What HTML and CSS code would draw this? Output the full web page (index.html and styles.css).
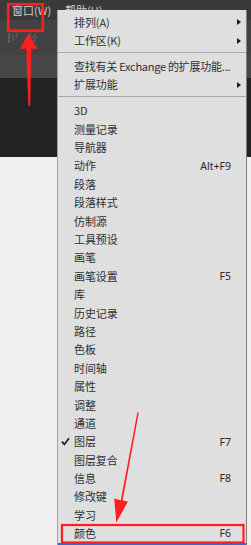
FILE: index.html
```html
<!DOCTYPE html>
<html lang="zh-CN">
<head>
<meta charset="utf-8">
<title>窗口菜单</title>
<link rel="stylesheet" href="styles.css">
</head>
<body>
<div class="app">
  <div class="menubar">
    <span class="menubar-item">窗口(W)</span>
    <span class="menubar-item">帮助(H)</span>
  </div>
  <div class="toolbar">
    <svg class="tool" width="12" height="12" viewBox="0 0 12 12"><rect x="1" y="1" width="2" height="10" fill="#5f5f5f"/><rect x="5" y="3" width="2" height="6" fill="#585858"/><rect x="9" y="1" width="2" height="4" fill="#5a5a5a"/></svg>
    <svg class="tool" width="12" height="12" viewBox="0 0 12 12"><rect x="2" y="1" width="2" height="10" fill="#5c5c5c"/><rect x="5" y="4" width="5" height="2" fill="#5c5c5c"/><rect x="7" y="2" width="2" height="8" fill="#555"/></svg>
    <svg class="tool tool-far" width="6" height="12" viewBox="0 0 6 12"><rect x="1" y="1" width="3" height="10" fill="#555"/></svg>
  </div>
  <div class="optbar"></div>
  <div class="docarea"></div>
  <div class="canvas"></div>

  <div class="menu">
    <div class="item"><span class="gutter"></span><span class="label">排列(A)</span><span class="key"></span><span class="sub"><i class="tri"></i></span></div>
    <div class="item"><span class="gutter"></span><span class="label">工作区(K)</span><span class="key"></span><span class="sub"><i class="tri"></i></span></div>
    <div class="sep"></div>
    <div class="item"><span class="gutter"></span><span class="label label-tight">查找有关 Exchange 的扩展功能...</span><span class="key"></span><span class="sub"></span></div>
    <div class="item"><span class="gutter"></span><span class="label">扩展功能</span><span class="key"></span><span class="sub"><i class="tri"></i></span></div>
    <div class="sep"></div>
    <div class="item"><span class="gutter"></span><span class="label">3D</span><span class="key"></span><span class="sub"></span></div>
    <div class="item"><span class="gutter"></span><span class="label">测量记录</span><span class="key"></span><span class="sub"></span></div>
    <div class="item"><span class="gutter"></span><span class="label">导航器</span><span class="key"></span><span class="sub"></span></div>
    <div class="item"><span class="gutter"></span><span class="label">动作</span><span class="key">Alt+F9</span><span class="sub"></span></div>
    <div class="item"><span class="gutter"></span><span class="label">段落</span><span class="key"></span><span class="sub"></span></div>
    <div class="item"><span class="gutter"></span><span class="label">段落样式</span><span class="key"></span><span class="sub"></span></div>
    <div class="item"><span class="gutter"></span><span class="label">仿制源</span><span class="key"></span><span class="sub"></span></div>
    <div class="item"><span class="gutter"></span><span class="label">工具预设</span><span class="key"></span><span class="sub"></span></div>
    <div class="item"><span class="gutter"></span><span class="label">画笔</span><span class="key"></span><span class="sub"></span></div>
    <div class="item"><span class="gutter"></span><span class="label">画笔设置</span><span class="key">F5</span><span class="sub"></span></div>
    <div class="item"><span class="gutter"></span><span class="label">库</span><span class="key"></span><span class="sub"></span></div>
    <div class="item"><span class="gutter"></span><span class="label">历史记录</span><span class="key"></span><span class="sub"></span></div>
    <div class="item"><span class="gutter"></span><span class="label">路径</span><span class="key"></span><span class="sub"></span></div>
    <div class="item"><span class="gutter"></span><span class="label">色板</span><span class="key"></span><span class="sub"></span></div>
    <div class="item"><span class="gutter"></span><span class="label">时间轴</span><span class="key"></span><span class="sub"></span></div>
    <div class="item"><span class="gutter"></span><span class="label">属性</span><span class="key"></span><span class="sub"></span></div>
    <div class="item"><span class="gutter"></span><span class="label">调整</span><span class="key"></span><span class="sub"></span></div>
    <div class="item"><span class="gutter"></span><span class="label">通道</span><span class="key"></span><span class="sub"></span></div>
    <div class="item"><span class="gutter"><svg class="check" width="9" height="9" viewBox="0 0 9 9"><polyline points="1,4.6 3.3,7.4 8,1.2" fill="none" stroke="#1e1e1e" stroke-width="1.7"/></svg></span><span class="label">图层</span><span class="key">F7</span><span class="sub"></span></div>
    <div class="item"><span class="gutter"></span><span class="label">图层复合</span><span class="key"></span><span class="sub"></span></div>
    <div class="item"><span class="gutter"></span><span class="label">信息</span><span class="key">F8</span><span class="sub"></span></div>
    <div class="item"><span class="gutter"></span><span class="label">修改键</span><span class="key"></span><span class="sub"></span></div>
    <div class="item"><span class="gutter"></span><span class="label">学习</span><span class="key"></span><span class="sub"></span></div>
    <div class="item"><span class="gutter"></span><span class="label">颜色</span><span class="key">F6</span><span class="sub"></span></div>
    <div class="item-selected"></div>
  </div>

  <svg class="annot" width="251" height="545" viewBox="0 0 251 545">
    <rect x="8.2" y="4.2" width="34.6" height="26.6" fill="none" stroke="#ff1f1f" stroke-width="2.6"/>
    <polygon points="28.5,33.5 37.5,49 31.3,48.5 30.2,106 28.4,106 26.2,48.5 20,49" fill="#ff1f1f"/>
    <polygon points="138.8,412.5 137.4,412.3 120.8,500.2 114.2,498.6 116.3,522.5 127.9,501.6 122.6,500.6" fill="#ff1f1f"/>
    <rect x="62" y="525" width="181.5" height="17.5" fill="none" stroke="#ff1f1f" stroke-width="2.2"/>
  </svg>
</div>
</body>
</html>
```

FILE: styles.css
```css
html, body {
  margin: 0;
  padding: 0;
}

body {
  width: 251px;
  height: 545px;
  overflow: hidden;
  background: #efefef;
  font-family: "Noto Sans", "Noto Sans CJK SC", sans-serif;
}

.app {
  position: relative;
  width: 251px;
  height: 545px;
  display: flex;
  flex-direction: column;
  overflow: hidden;
}

.menubar {
  height: 20px;
  flex: none;
  display: flex;
  align-items: center;
  gap: 14px;
  padding-left: 12px;
  background: #3a3a3a;
  color: #cdcdcd;
  font-size: 11px;
  line-height: 1;
  font-family: "Noto Sans CJK SC", sans-serif;
}

.toolbar {
  height: 35px;
  flex: none;
  display: flex;
  align-items: center;
  gap: 8px;
  padding-left: 7px;
  background: #424242;
}

.tool {
  display: block;
  opacity: 0.9;
}

.tool-far {
  margin-left: 16px;
}

.optbar {
  height: 23px;
  flex: none;
  background: #474747;
}

.docarea {
  height: 79px;
  flex: none;
  background: #232323;
}

.canvas {
  flex: 1;
  background: #efefef;
}

.menu {
  position: absolute;
  left: 57px;
  top: 10px;
  width: 190px;
  height: 545px;
  box-sizing: border-box;
  padding-top: 3px;
  background: #dfdfdf;
  border-left: 1px solid #a2a2a2;
  border-right: 1px solid #7c7c7c;
  color: #2f2f2f;
  font-size: 11px;
}

.item {
  height: 18.4px;
  display: grid;
  grid-template-columns: 16px 1fr auto 15px;
  align-items: center;
  white-space: nowrap;
}

.item-selected {
  height: 18.4px;
  background: #2b6fd4;
}

.gutter {
  display: flex;
  align-items: center;
  padding-left: 3px;
}

.check {
  display: block;
}

.label {
  font-family: "Noto Sans CJK SC", sans-serif;
  line-height: 1;
  letter-spacing: -0.1px;
}

.label-tight {
  letter-spacing: -0.25px;
}

.key {
  font-family: "Noto Sans", "Liberation Sans", sans-serif;
  font-size: 10.5px;
  line-height: 1;
  color: #2a2a2a;
}

.sub {
  display: flex;
  align-items: center;
  padding-left: 6px;
}

.tri {
  display: block;
  width: 0;
  height: 0;
  border-left: 4px solid #1a1a1a;
  border-top: 3.5px solid transparent;
  border-bottom: 3.5px solid transparent;
}

.sep {
  height: 1px;
  margin: 2px 0 4.5px;
  background: #aaaaaa;
}

.annot {
  position: absolute;
  left: 0;
  top: 0;
  pointer-events: none;
}
```
